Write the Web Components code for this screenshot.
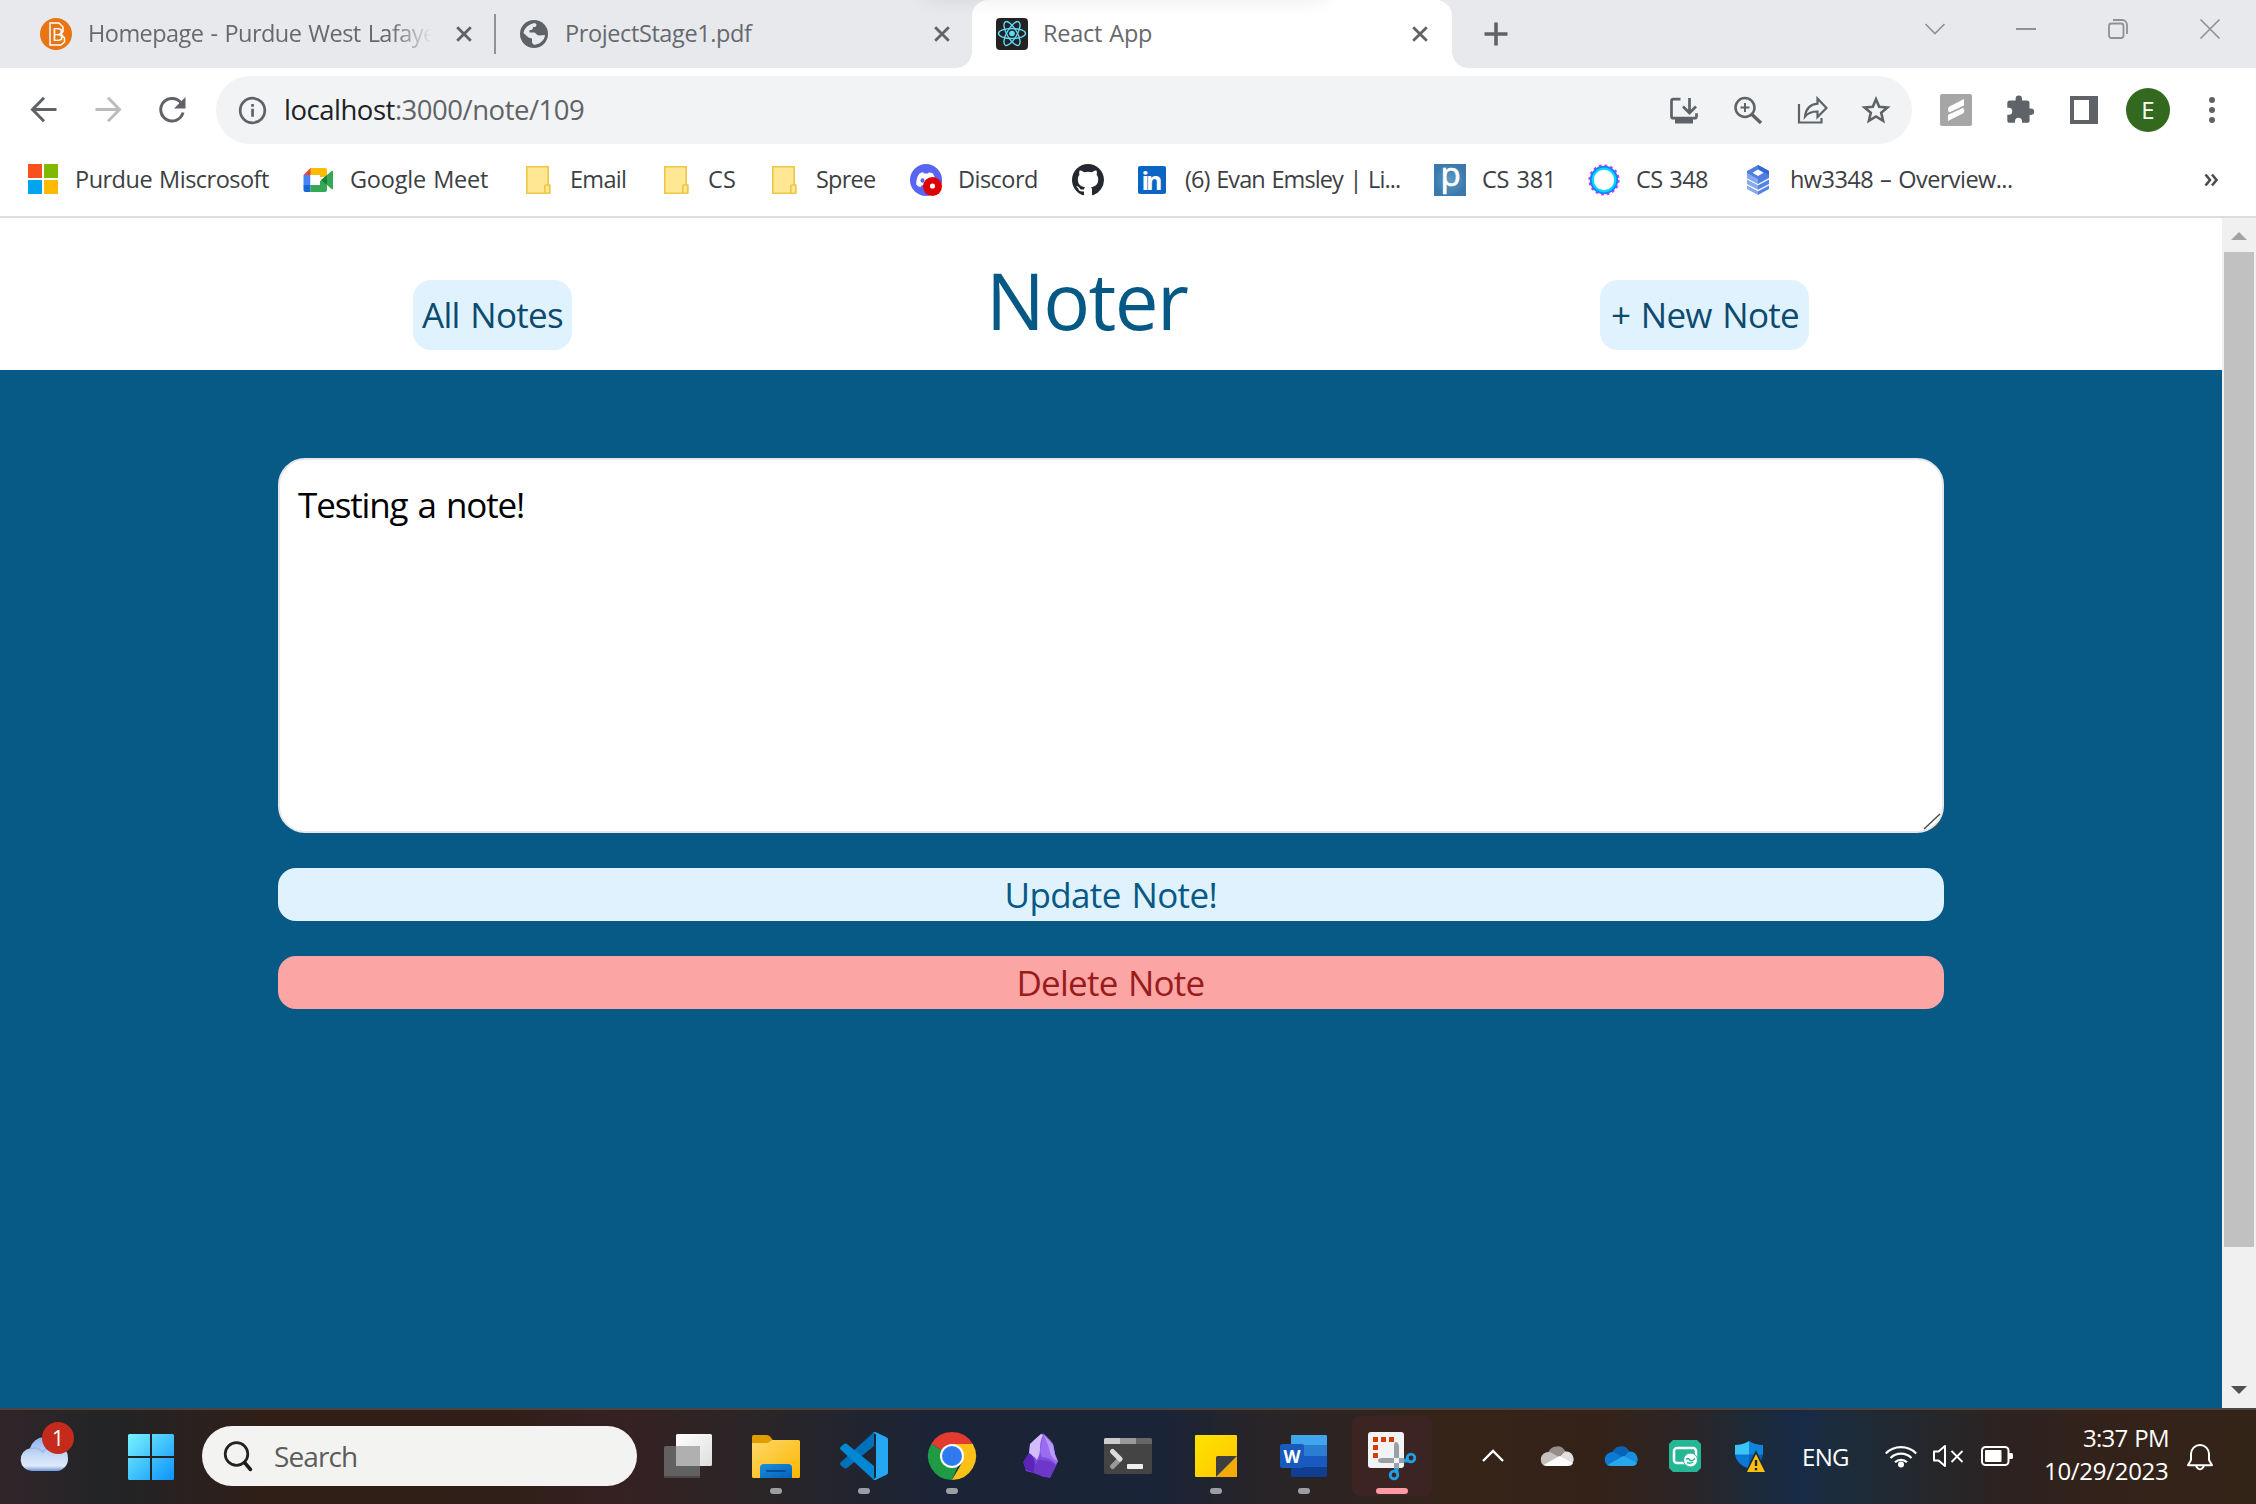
<!DOCTYPE html>
<html lang="en">
<head>
<meta charset="utf-8">
<title>React App</title>
<style>
html,body{margin:0;padding:0}
body{width:2256px;height:1504px;overflow:hidden;font-family:"Open Sans","Noto Sans",sans-serif;background:#fff}
</style>
</head>
<body>
<desktop-screen></desktop-screen>
<script>
const ICONS = {
  brightspace:[32,32,'<circle cx="16" cy="16" r="16" fill="#e87511"/><path d="M10 5h9l4 4v4.500l-2 2.500 3.500 4v4L21 27H10z" fill="none" stroke="#fff" stroke-width="1.500"/><text x="12" y="23" font-family="Open Sans,sans-serif" font-size="18" font-weight="400" fill="#fff">B</text>'],
  globe:[28,28,'<circle cx="14" cy="14" r="14" fill="#5f6368"/><path d="M15 3C9 4 4.500 7.500 3.500 13l5 4.500 3.500 1v3.500c0 2 2 2.500 2.500 3l.5-.2c5-.8 9.500-4.500 10-9.800l-6 .5c-2.500 0-3-3-5-3H9.500v-2.500c2.500.3 3.500-.5 3.500-3 2.500.2 3.500-.5 3.500-2.500z" fill="#e8eaed"/>'],
  react:[32,32,'<rect width="32" height="32" rx="4" fill="#222"/><g fill="none" stroke="#61dafb" stroke-width="1.400"><ellipse cx="16" cy="15.500" rx="13.500" ry="5"/><ellipse cx="16" cy="15.500" rx="13.500" ry="5" transform="rotate(60 16 15.500)"/><ellipse cx="16" cy="15.500" rx="13.500" ry="5" transform="rotate(120 16 15.500)"/></g><circle cx="16" cy="15.500" r="2.800" fill="#61dafb"/>'],
  close:[16,16,'<path d="M1.200 1.200 14.800 14.800M14.800 1.200 1.200 14.800" stroke="#5f6368" stroke-width="2.800"/>'],
  plus:[24,24,'<path d="M12 .5v23M.5 12h23" stroke="#5f6368" stroke-width="3.600"/>'],
  wchev:[20,20,'<path d="M.5 5 10 14.500 19.500 5" fill="none" stroke="#919194" stroke-width="1.700"/>'],
  wmin:[20,20,'<path d="M0 10h20" stroke="#919194" stroke-width="2"/>'],
  wmax:[20,20,'<rect x="1" y="4.500" width="14.500" height="14.500" rx="2.500" fill="none" stroke="#919194" stroke-width="1.800"/><path d="M5 1h9a5 5 0 0 1 5 5v9" fill="none" stroke="#919194" stroke-width="1.800"/>'],
  wclose:[20,20,'<path d="M.5.5l19 19M19.500.5l-19 19" stroke="#919194" stroke-width="1.700"/>'],
  back:[32,32,'<path d="M28.500 15.500H4.500M16 3.800 4.500 15.500 16 27.200" fill="none" stroke="#5f6368" stroke-width="3"/>'],
  forward:[32,32,'<path d="M3.500 15.500h24M16 3.800 27.500 15.500 16 27.200" fill="none" stroke="#babcbe" stroke-width="3"/>'],
  reload:[32,32,'<path d="M25.500 9.500A11.300 11.300 0 1 0 27 18.500" fill="none" stroke="#5f6368" stroke-width="3"/><path d="M29.500 3v11.500H18z" fill="#5f6368"/>'],
  info:[32,32,'<circle cx="16.500" cy="16.500" r="12.300" fill="none" stroke="#5f6368" stroke-width="2.700"/><path d="M15.200 14.800h2.700v8h-2.700zM15.200 10h2.700v2.700h-2.700z" fill="#5f6368"/>'],
  install:[32,32,'<path d="M12.500 5.200H5.500a2 2 0 0 0-2 2v15a2 2 0 0 0 2 2h21a2 2 0 0 0 2-2v-3M21.500 4v14M15 12.500l6.500 6.500 6.500-6.500" fill="none" stroke="#5f6368" stroke-width="2.700"/><path d="M7 25h18v4.500H7z" fill="#5f6368"/>'],
  zoomin:[32,32,'<circle cx="13" cy="13.500" r="9.500" fill="none" stroke="#5f6368" stroke-width="2.500"/><path d="M20 20.500l9 8.500" stroke="#5f6368" stroke-width="3.400"/><path d="M13 9v9M8.500 13.500h9" stroke="#5f6368" stroke-width="2"/>'],
  share:[32,32,'<path d="M3 10v18.500h22.500V24" fill="none" stroke="#5f6368" stroke-width="2.200"/><path d="M21.500 4.500l9 9.500-9 9v-5.500c-6 0-9.500 1.500-12.500 5 .8-6.500 4.500-12 12.500-12.800z" fill="none" stroke="#5f6368" stroke-width="2.200"/>'],
  star:[32,32,'<path d="M16 5.300l3.200 7.500 8.200.7-6.200 5.300 1.900 8-7.100-4.300-7.100 4.300 1.900-8-6.200-5.300 8.200-.7z" fill="none" stroke="#5f6368" stroke-width="2.600"/>'],
  ext:[32,32,'<rect width="32" height="32" rx="2" fill="#a6a6a6"/><path d="M24 5v6.500L9.500 18.500c-2-1.500-2-4.500 0-6zM8 27v-6.500L22.500 13.500c2.500 2 2.500 4.500.3 6z" fill="#fff"/><path d="M7 19.800 25 11.600v1.500L7 21.300z" fill="#a6a6a6"/>'],
  puzzle:[32,32,'<path transform="translate(1 0)" d="M26 14.500h-1.500V9a2.600 2.600 0 0 0-2.600-2.600H17V4.800a3.200 3.200 0 0 0-6.400 0v1.600H5A2.600 2.600 0 0 0 2.300 9v4.800h1.500a3.500 3.500 0 0 1 0 7H2.300v5.400A2.600 2.600 0 0 0 5 28.800h5v-1.500a3.500 3.500 0 0 1 7 0v1.500h5a2.600 2.600 0 0 0 2.600-2.600v-5.300H26a3.200 3.200 0 0 0 0-6.400z" fill="#5f6368"/>'],
  panel:[32,32,'<path d="M2 2h28v28H2zM6 6v20h15V6z" fill-rule="evenodd" fill="#5f6368"/>'],
  avatar:[44,44,'<circle cx="22" cy="22" r="22" fill="#33691e"/><text x="22" y="30.500" text-anchor="middle" font-family="Open Sans,sans-serif" font-size="24" fill="#fff">E</text>'],
  dots:[32,32,'<g fill="#5f6368"><circle cx="16" cy="6" r="3"/><circle cx="16" cy="16" r="3"/><circle cx="16" cy="26" r="3"/></g>'],
  ms:[32,32,'<path d="M1 0h14v14H1z" fill="#f8511d"/><path d="M17 0h14v14H17z" fill="#80b900"/><path d="M1 16h14v14H1z" fill="#00a4ef"/><path d="M17 16h14v14H17z" fill="#ffb902"/>'],
  meet:[32,32,'<path d="M8 4h15a2 2 0 0 1 2 2v7H18V11H8z" fill="#fbbc04"/><path d="M1.500 11 8.500 4v7z" fill="#ea4335"/><path d="M1.500 11h7v10.500h-7z" fill="#4285f4"/><path d="M1.500 21h7v7H3.500a2 2 0 0 1-2-2z" fill="#1967d2"/><path d="M8.500 21H18v-4l7-4v13a2 2 0 0 1-2 2H8.500z" fill="#34a853"/><path d="M19 16l6-5v10z" fill="#188038"/><path d="M25 11l4.500-4c.8-.6 1.500-.3 1.500.6v16.800c0 1-.8 1.200-1.500.6l-4.500-4z" fill="#34a853"/><path d="M8.500 11H18v10H8.500z" fill="#fff"/>'],
  folder:[32,32,'<path d="M4.800 2.800h21.400V21h1.500v8.200H4.800z" fill="#ffe793" stroke="#edc748" stroke-width="1.600"/><path d="M22.800 29v-6.500q0-1.500 1.500-1.500h2q1.400 0 1.400 1.500v5q0 1.700-1.700 1.700z" fill="#ffe793" stroke="#edc748" stroke-width="1.600"/>'],
  discord:[32,32,'<circle cx="16" cy="16" r="16" fill="#5865f2"/><path d="M9.500 9.500q3-1.600 4-1l.5 1h4l.5-1q2-.5 4.500 1 3 5 2.800 11-2 2.500-4.500 2.500l-1-1.800h-8.600l-1 1.800q-2.500 0-4.500-2.500Q6 14 9.500 9.500z" fill="#fff"/><ellipse cx="12.500" cy="16.500" rx="2" ry="2.300" fill="#5865f2"/><circle cx="22.500" cy="22.500" r="9.500" fill="#de0000"/><circle cx="22.500" cy="22" r="2.600" fill="#fff"/>'],
  github:[32,32,'<path transform="scale(2)" fill="#24292f" d="M8 0C3.580 0 0 3.580 0 8c0 3.540 2.290 6.530 5.470 7.590.4.070.55-.17.55-.38 0-.19-.01-.82-.01-1.490-2.010.37-2.530-.49-2.690-.94-.09-.23-.48-.94-.82-1.130-.28-.15-.68-.52-.01-.53.63-.01 1.080.58 1.230.82.72 1.210 1.870.87 2.330.66.07-.52.28-.87.51-1.070-1.780-.2-3.640-.89-3.640-3.950 0-.87.31-1.590.82-2.150-.08-.2-.36-1.020.08-2.120 0 0 .67-.21 2.200.82.64-.18 1.320-.27 2-.27s1.360.09 2 .27c1.530-1.040 2.200-.82 2.200-.82.44 1.100.16 1.920.08 2.120.51.56.82 1.270.82 2.150 0 3.070-1.870 3.750-3.650 3.950.29.25.54.73.54 1.480 0 1.070-.01 1.930-.01 2.200 0 .21.15.46.55.38A8.010 8.010 0 0 0 16 8c0-4.420-3.580-8-8-8z"/>'],
  linkedin:[32,32,'<rect x="2" y="2" width="28" height="28" rx="2" fill="#0a66c2"/><text x="16" y="26" text-anchor="middle" textLength="21" font-family="Open Sans,sans-serif" font-size="25" font-weight="700" fill="#fff">in</text>'],
  piazza:[32,32,'<defs><radialGradient id="pz"><stop offset="0" stop-color="#5b9bc7"/><stop offset="1" stop-color="#3c79aa"/></radialGradient></defs><rect width="32" height="32" fill="url(#pz)"/><text x="16.500" y="21.500" text-anchor="middle" font-family="Open Sans,sans-serif" font-size="33" font-weight="400" stroke="#fff" stroke-width=".7" fill="#fff">p</text>'],
  ring:[32,32,'<circle cx="16" cy="16" r="14.300" fill="none" stroke="#d83cf5" stroke-width="2.600" stroke-dasharray="2.800 2.815"/><circle cx="16" cy="16" r="12.700" fill="none" stroke="#1a7cff" stroke-width="3"/><circle cx="16" cy="16" r="11.300" fill="none" stroke="#00d5ff" stroke-width="2.200"/>'],
  stack:[32,32,'<path d="M16 1l11 6v7l-11 6-11-6V7z" fill="#4f7fe0"/><path d="M16 1l11 6v4L16 5z" fill="#3367d6"/><path d="M16 5.500l5.500 3.300-5.500 3.300-5.500-3.300z" fill="#fff"/><path d="M5 15.500l11 5.800v4.500L5 20zM5 21.500l11 5.800V31L5 25z" fill="#86a9ee"/><path d="M27 15.500l-11 5.800v4.500L27 20zM27 21.500l-11 5.800V31l11-6z" fill="#5484e4"/><path d="M5 9l11 6v5L5 14z" fill="#86a9ee"/>'],
  more:[14,16,'<path d="M1.500 2.500l4.500 5.500-4.500 5.500M8 2.500l4.500 5.500L8 13.500" fill="none" stroke="#4a4d51" stroke-width="2.600"/>'],
  resize:[18,17,'<path d="M1 16 17 1M11 16l6-6" stroke="#4a4a4a" stroke-width="1.400"/>'],
  weather:[56,50,'<defs><linearGradient id="cl" x1="0" y1="0" x2="0" y2="1"><stop offset="0" stop-color="#8cb0ef"/><stop offset=".5" stop-color="#c2d7f6"/><stop offset=".85" stop-color="#dfeafb"/><stop offset="1" stop-color="#6f96e0"/></linearGradient></defs><path d="M12 49a11.500 11.500 0 0 1-2-22.800A15.500 15.500 0 0 1 39 24q9 2 9 12.500A12 12 0 0 1 37 49z" fill="url(#cl)"/><path d="M10 27q7-3 13 3 4-6 12-5" fill="none" stroke="#9cb9ea" stroke-width="1.500"/><circle cx="38" cy="16" r="16" fill="#c42b1c"/><text x="38" y="23.500" text-anchor="middle" font-family="Open Sans,sans-serif" font-size="21" fill="#fff">1</text>'],
  start:[46,46,'<defs><linearGradient id="st" gradientUnits="userSpaceOnUse" x1="0" y1="0" x2="46" y2="46"><stop offset="0" stop-color="#7af2ff"/><stop offset="1" stop-color="#0a93fb"/></linearGradient></defs><path d="M1.500 0H22v22H0V1.500Q0 0 1.500 0zM24 0h20.500Q46 0 46 1.500V22H24zM0 24h22v22H1.500Q0 46 0 44.500zM24 24h22v20.500q0 1.500-1.500 1.500H24z" fill="url(#st)"/>'],
  search:[28,30,'<circle cx="12.500" cy="13" r="11.300" fill="none" stroke="#222" stroke-width="2.700"/><path d="M20.500 21.500l6 7" stroke="#1c1c1c" stroke-width="3.500" stroke-linecap="round"/>'],
  taskview:[48,48,'<defs><linearGradient id="tv" x1="0" y1="0" x2="1" y2="1"><stop offset="0" stop-color="#fff"/><stop offset="1" stop-color="#dedede"/></linearGradient></defs><rect x="0" y="14" width="36" height="32" rx="1.500" fill="#616161"/><rect x="12" y="2" width="36" height="32" rx="1.500" fill="url(#tv)"/><path d="M12 14h24v20H12z" fill="#b0b0b0"/><path d="M0 44h36v1q0 1-1 1H1q-1 0-1-1z" fill="#484848"/>'],
  explorer:[48,48,'<defs><linearGradient id="fo" x1="0" y1="0" x2="1" y2="1"><stop offset="0" stop-color="#ffd868"/><stop offset="1" stop-color="#fab702"/></linearGradient><linearGradient id="fb" x1="0" y1="0" x2="1" y2="1"><stop offset="0" stop-color="#1a90e0"/><stop offset="1" stop-color="#0560b6"/></linearGradient></defs><path d="M0 4.500Q0 3 1.500 3H15q2 0 3.500 2l3 4-6 5H0z" fill="#e09c00"/><path d="M0 11h14q2 0 4-1.500l2-1.500h26.500Q48 8 48 9.500v35q0 1.500-1.500 1.500h-45Q0 46 0 44.500z" fill="url(#fo)"/><path d="M8 46V36q0-4 4-4h24q4 0 4 4v10z" fill="url(#fb)"/><path d="M15 39h18" stroke="#0a4c94" stroke-width="1.800" stroke-linecap="round"/>'],
  vscode:[48,48,'<path d="M34 0v14L7 36q-1.500 1-3 0l-3.500-3q-1-1.200 0-2.500z" fill="#0070b8"/><path d="M34 48V34L7 12q-1.500-1-3 0L.5 15q-1 1.200 0 2.500z" fill="#0088d4"/><path d="M33 .5q1.500-1 3.500 0L47 5.500q1 .5 1 2v33q0 1.500-1 2l-10.500 5q-2 1-3 .2l2.500-2.700V2.500z" fill="#24a8f2"/>'],
  chrome:[48,48,'<path d="M24 24 3.200 12A24 24 0 0 1 44.800 12z" fill="#e33b2e"/><path d="M24 24H34.500L24 48A24 24 0 0 1 3.200 12z" fill="#1f9a45"/><path d="M24 12h20.800A24 24 0 0 1 24 48l10.400-18z" fill="#fbc116"/><circle cx="24" cy="24" r="12" fill="#fff"/><circle cx="24" cy="24" r="10" fill="#2f7af0"/>'],
  obsidian:[48,48,'<path d="M25 2q2-1 3.500.5L37 12l2 10 3 7.500-8 16-7-1-9-3.500-8-2-2.500-9L13 21l1-9z" fill="#7c4bdb"/><path d="M25 2q-6 5-11 10l-1 10q5 2 8 6 3-5 3-10 0-9 3-15z" fill="#d3bcfa"/><path d="M27.500 2Q36 9 37.500 13l1.500 9 3 7.500-2 2.500q-5-6-14-7-3-5-1-11 1-7 2.500-12z" fill="#9a6cf2"/><path d="M28 3l9 10 2 10 2.500 6q-5-2-7-7-2-9-6.500-19z" fill="#b99af6"/><path d="M13 21q8 4 5 20L9.500 37.500 7 30z" fill="#5b24b8"/><path d="M18 41q-1-9 5-13 11-1 17 6l-6 12-7-1.500z" fill="#6d38c9"/>'],
  terminal:[48,48,'<rect y="6" width="48" height="36" rx="1.800" fill="#444"/><path d="M0 12V7.500Q0 6 1.500 6H16v6z" fill="#ccc"/><path d="M16 6h16v6H16z" fill="#999"/><path d="M32 6h14.500Q48 6 48 7.500V12H32z" fill="#666"/><path d="M8.500 34.500 16 27" stroke="#999" stroke-width="5" stroke-linecap="round"/><path d="M8.500 19.500l7.500 7.500" stroke="#ddd" stroke-width="5" stroke-linecap="round"/><rect x="23" y="32" width="16" height="5" rx=".8" fill="#eee"/>'],
  sticky:[48,48,'<defs><linearGradient id="sn" x1="0" y1="0" x2="1" y2="1"><stop offset="0" stop-color="#ffe400"/><stop offset="1" stop-color="#ffc402"/></linearGradient></defs><rect x="3" y="3" width="42" height="42" rx="1" fill="url(#sn)"/><path d="M45 24v21H24z" fill="#f3ab08"/><path d="M24 25.500Q24 24 25.500 24H45L24 45z" fill="#3f3f41"/>'],
  word:[48,48,'<path d="M11 4.200Q11 3 12.200 3h33.300Q47 3 47 4.200V14H11z" fill="#41a5ee"/><path d="M11 13h36v11H11z" fill="#2b7cd3"/><path d="M11 24h36v11H11z" fill="#185abd"/><path d="M11 35h36v8.500q0 1.500-1.500 1.500h-33Q11 45 11 43.500z" fill="#103f91"/><rect x="0" y="12" width="24" height="24" rx="2" fill="#185abd"/><text x="12" y="30.500" text-anchor="middle" textLength="17" lengthAdjust="spacingAndGlyphs" font-family="Open Sans,sans-serif" font-size="18.500" font-weight="700" fill="#fff">W</text>'],
  snip:[48,48,'<rect width="36" height="36" rx="3" fill="#f1f3f4"/><g fill="#d83b01"><path d="M5 5h5v5H5zM13 5h5v5h-5zM21 5h5v5h-5zM5 13h5v5H5zM5 21h5v5H5z"/></g><path d="M26 37V14q0-4 2-4t3 4v23zM36 26H14q-4 0-4 2.500T14 31h22z" fill="#9aa0a6"/><circle cx="28.500" cy="28.500" r="1.200" fill="#eee"/><circle cx="43" cy="26" r="3.800" fill="none" stroke="#1ea0e8" stroke-width="2.800"/><circle cx="26" cy="43" r="3.800" fill="none" stroke="#1ea0e8" stroke-width="2.800"/><path d="M36 28.500h5M28.500 36v5" stroke="#1ea0e8" stroke-width="4"/>'],
  tchev:[24,32,'<path d="M2 21 12 11l10 10" fill="none" stroke="#fff" stroke-width="2.400"/>'],
  cloudw:[32,32,'<path d="M7 13a9.500 9.500 0 0 1 17.500-1.500l-9 7z" fill="#978d88"/><path d="M0 21a7.500 7.500 0 0 1 10-8.500l8 4.500L2 25q-2-1.500-2-4z" fill="#c6c1be"/><path d="M18 17l6-5.500a7.500 7.500 0 0 1 7 12z" fill="#e2dfde"/><path d="M2 25l16.500-9L32 23q-1 3-5 3H6q-2.500 0-4-1z" fill="#fff"/>'],
  cloudb:[32,32,'<path d="M7 13a9.500 9.500 0 0 1 17.500-1.500l-9 7z" fill="#0763b8"/><path d="M0 21a7.500 7.500 0 0 1 10-8.500l8 4.500L2 25q-2-1.500-2-4z" fill="#0a7ad6"/><path d="M18 17l6-5.500a7.500 7.500 0 0 1 7 12z" fill="#1590de"/><path d="M2 25l16.500-9L32 23q-1 3-5 3H6q-2.500 0-4-1z" fill="#28a8ea"/>'],
  cast:[32,32,'<path d="M4 0h24l4 4v24l-4 4H4l-4-4V4z" fill="#25b795"/><rect x="5" y="8" width="22" height="15" rx="3" fill="none" stroke="#fff" stroke-width="2.500"/><circle cx="21.500" cy="20" r="7" fill="#fff" stroke="#25b795" stroke-width="1"/><path d="M17 19.500q2-2 3.500 0t3 1l2.500-2M18 22.500q3 1.500 6-.5" fill="none" stroke="#25b795" stroke-width="1.500"/>'],
  shield:[32,32,'<path d="M1 5q8 0 14-4v14H1z" fill="#3cc4f5"/><path d="M15 1q6 4 14 4v10H15z" fill="#0f86dc"/><path d="M1 14.500h14V29Q2 24 1 14.500z" fill="#0a78d4"/><path d="M15 14.500h14Q28 24 15 29z" fill="#0560b8"/><path d="M22 10 11.500 32h20.500z" fill="#1d2a38"/><path d="M22 14l9 18H13z" fill="#fdc012"/><path d="M20.800 20h2.400v6h-2.400zM20.800 28h2.400v2.200h-2.400z" fill="#222"/>'],
  wifi:[32,32,'<g fill="none" stroke="#fff" stroke-width="2.200"><path d="M.8 13.500a21.500 21.500 0 0 1 30.400 0"/><path d="M5.500 18a15 15 0 0 1 21 0"/><path d="M10 22.300a8.500 8.500 0 0 1 12 0"/></g><circle cx="16" cy="24.500" r="3" fill="#fff"/>'],
  mute:[32,32,'<path d="M2 11.500h4.500L13 6v20l-6.500-5.500H2z" fill="none" stroke="#fff" stroke-width="2" stroke-linejoin="round"/><path d="M19.500 11l11 11M30.500 11l-11 11" stroke="#fff" stroke-width="1.800"/>'],
  battery:[32,32,'<rect x="1" y="7" width="26.500" height="18" rx="3.500" fill="none" stroke="#fff" stroke-width="2"/><rect x="4" y="10" width="16.500" height="12" rx="1" fill="#fff"/><path d="M28 13h2.500q1.500 0 1.500 1.500v3q0 1.500-1.500 1.500H28z" fill="#fff"/>'],
  bell:[26,30,'<path d="M4 13a9 9 0 0 1 18 0v6l3 5.200H1L4 19z" fill="none" stroke="#fff" stroke-width="2" stroke-linejoin="round"/><path d="M9 25q4 6.500 8 0" fill="none" stroke="#fff" stroke-width="2"/>'],
  up:[16,8,'<path d="M0 8 8 0l8 8z" fill="#a3a3a3"/>'],
  down:[16,8,'<path d="M0 0 8 8l8-8z" fill="#505050"/>']
};

function define(name, markup, setup) {
  const template = document.createElement('template');
  template.innerHTML = markup;
  customElements.define(name, class extends HTMLElement {
    connectedCallback() {
      if (this.shadowRoot) return;
      this.attachShadow({mode:'open'}).append(template.content.cloneNode(true));
      if (setup) setup(this, this.shadowRoot);
    }
  });
}

define('ui-icon', '<style>:host{display:block;flex:none}svg{display:block;overflow:visible}</style><div></div>', (host, root) => {
  const [w, h, body] = ICONS[host.getAttribute('name')];
  host.style.width = w + 'px';
  root.querySelector('div').innerHTML = `<svg width="${w}" height="${h}" viewBox="0 0 ${w} ${h}">${body}</svg>`;
});

const pen = document.createElement('canvas').getContext('2d');
define('ui-label', '<style>:host{display:block;flex:none;white-space:nowrap;line-height:1.36;word-spacing:.06em}span{display:block}</style><span><slot></slot></span>', (host, root) => {
  const size = +host.getAttribute('size'), width = +host.getAttribute('width');
  const text = host.textContent;
  const stem = /^[A-Zh-l+]/.test(text) && !/^[AGCST]/.test(text) ? 1 : 0;
  pen.font = `400 ${size}px "Open Sans"`;
  const m = pen.measureText(text);
  const ink = m.actualBoundingBoxRight + m.actualBoundingBoxLeft + (text.split(' ').length - 1) * .06 * size;
  host.style.fontSize = size + 'px';
  host.style.width = width + 'px';
  host.style.letterSpacing = (text.length > 1 ? (width - stem - ink) / (text.length - 1) : 0) + 'px';
  root.querySelector('span').style.marginLeft = (m.actualBoundingBoxLeft + stem) + 'px';
});

define('browser-tab', `<style>
:host{display:flex;align-items:center;box-sizing:border-box;height:68px;flex:none;position:relative;color:#66696d}
:host([active]){background:#fff;border-radius:16px 16px 0 0}
:host([active])::before,:host([active])::after{content:"";position:absolute;bottom:0;width:16px;height:16px}
:host([active])::before{left:-16px;background:radial-gradient(circle at 0 0,transparent 15.5px,#fff 16px)}
:host([active])::after{right:-16px;background:radial-gradient(circle at 100% 0,transparent 15.5px,#fff 16px)}
.x{margin-left:auto}
:host([faded]) .t{width:343px;overflow:hidden;-webkit-mask:linear-gradient(90deg,#000 88%,transparent)}
</style><slot name="icon"></slot><div class="t"><slot></slot></div><ui-icon class="x" name="close"></ui-icon>`);

define('tab-strip', `<style>
:host{display:flex;align-items:center;height:68px;background:#e8e9ed;position:relative;overflow:hidden}
.sep{width:2px;height:40px;background:#8f9296;flex:none}
.plus{margin-left:32px}
.win{margin:0 36px 10px auto;display:flex;gap:72px}
.win :first-child{margin-right:-1px}
.shade{position:absolute;left:925px;top:-22px;width:400px;height:20px;box-shadow:0 0 20px rgba(0,0,0,.1)}
</style>
<browser-tab faded style="width:494px;padding:0 22px 0 40px;gap:17px"><ui-icon slot="icon" name="brightspace"></ui-icon><ui-label size="23.500" width="346">Homepage - Purdue West Lafaye</ui-label></browser-tab>
<div class="sep"></div>
<browser-tab style="width:476px;padding:0 22px 0 24px;gap:18px"><ui-icon slot="icon" name="globe"></ui-icon><ui-label size="23.500" width="187">ProjectStage1.pdf</ui-label></browser-tab>
<browser-tab active style="width:480px;padding:0 24px;gap:16px"><ui-icon slot="icon" name="react"></ui-icon><ui-label size="23.500" width="108">React App</ui-label></browser-tab>
<ui-icon class="plus" name="plus"></ui-icon>
<div class="win"><ui-icon name="wchev"></ui-icon><ui-icon name="wmin"></ui-icon><ui-icon name="wmax"></ui-icon><ui-icon name="wclose"></ui-icon></div>
<div class="shade"></div>`);

define('nav-toolbar', `<style>
:host{display:flex;align-items:center;height:68px;padding:8px 28px 0;background:#fff}
.nav,.ext,.acts{display:flex;align-items:center;gap:32px}
.box{flex:1;margin:0 28px;height:68px;border-radius:34px;background:#f1f3f4;display:flex;align-items:center;padding:0 20px;box-sizing:border-box}
.url{margin-left:17px;color:#5f6368}
.acts{margin-left:auto}
.ext ui-icon[name=avatar]{margin:0 -6px}
</style>
<div class="nav"><ui-icon name="back"></ui-icon><ui-icon name="forward"></ui-icon><ui-icon name="reload"></ui-icon></div>
<div class="box"><ui-icon name="info"></ui-icon><ui-label class="url" size="27.500" width="299"><span style="color:#202124">localhost</span>:3000/note/109</ui-label>
<div class="acts"><ui-icon name="install"></ui-icon><ui-icon name="zoomin"></ui-icon><ui-icon name="share"></ui-icon><ui-icon name="star"></ui-icon></div></div>
<div class="ext"><ui-icon name="ext"></ui-icon><ui-icon name="puzzle"></ui-icon><ui-icon name="panel"></ui-icon><ui-icon name="avatar"></ui-icon><ui-icon name="dots"></ui-icon></div>`);

define('bookmark-item', '<style>:host{display:flex;align-items:center;gap:17px;flex:none;color:#3c4043}</style><slot></slot>');

const marks = [['ms',275,'Purdue Miscrosoft',193],['meet',220,'Google Meet',137],['folder',138,'Email',54],['folder',108,'CS',26],['folder',142,'Spree',58],['discord',162,'Discord',78],['github',64,'',0],['linkedin',298,'(6) Evan Emsley | Li...',215],['piazza',154,'CS 381',69],['ring',154,'CS 348',71],['stack',280,'hw3348 – Overview...',221]];
define('bookmarks-bar', `<style>
:host{display:flex;align-items:center;height:72px;padding:0 38px 0 27px;background:#fff;border-bottom:2px solid #dcdddd}
.more{margin-left:auto}
</style>${marks.map(([i,p,t,w]) => `<bookmark-item style="width:${p}px"><ui-icon name="${i}"></ui-icon>${t ? `<ui-label size="23.500" width="${w}">${t}</ui-label>` : ''}</bookmark-item>`).join('')}<ui-icon class="more" name="more"></ui-icon>`);

define('pill-button', `<style>
:host{display:flex;align-items:center;justify-content:center;box-sizing:border-box;border-radius:18px;background:#e0f2fe;color:#0c4a6e;height:70px}
:host([wide]){height:53px;color:#075985}
:host([tone=danger]){background:#fca5a5;color:#991b1b}
</style><slot></slot>`);

define('note-header', `<style>
:host{display:flex;align-items:flex-start;height:152px;box-sizing:border-box;background:#fff;padding:0 413px}
pill-button{margin-top:62px}
.logo{color:#075985;margin:29px auto 0 420px}
</style>
<pill-button style="width:159px"><ui-label size="35" width="141">All Notes</ui-label></pill-button>
<ui-label class="logo" size="78" width="196">Noter</ui-label>
<pill-button style="width:209px"><ui-label size="35" width="187">+ New Note</ui-label></pill-button>`);

define('note-editor', `<style>
:host{display:flex;justify-content:flex-end;align-items:flex-end;flex-direction:column;height:375px;box-sizing:border-box;border:2px solid #e5e7eb;border-radius:27px;background:#fff;padding:18px 1px 1px 18px;color:#000}
.t{align-self:flex-start;margin-bottom:auto;padding-top:3px}
</style><div class="t"><slot></slot></div><ui-icon name="resize"></ui-icon>`);

define('page-scrollbar', `<style>
:host{display:flex;flex-direction:column;align-items:center;justify-content:space-between;width:34px;box-sizing:border-box;padding:14px 0 14px;background:#f0f0f0}
.thumb{width:30px;height:995px;background:#c1c1c1;margin-top:12px;margin-bottom:auto}
</style><ui-icon name="up"></ui-icon><div class="thumb"></div><ui-icon name="down"></ui-icon>`);

define('note-page', `<style>
:host{display:flex;height:1190px}
main{flex:1;background:#065a85;display:flex;flex-direction:column}
section{padding:88px 278px 0;display:flex;flex-direction:column;gap:35px}
</style><main><note-header></note-header><section>
<note-editor><ui-label size="35" width="225">Testing a note!</ui-label></note-editor>
<pill-button wide><ui-label size="35" width="209">Update Note!</ui-label></pill-button>
<pill-button wide tone="danger"><ui-label size="35" width="185">Delete Note</ui-label></pill-button>
</section></main><page-scrollbar></page-scrollbar>`);

define('task-app', `<style>
:host{display:flex;flex-direction:column;align-items:center;box-sizing:border-box;width:80px;height:80px;padding-top:16px;border-radius:8px;flex:none}
:host([focused]){background:#3c2422}
i{display:none;width:12px;height:6px;border-radius:3px;background:#9d9ea3;margin-top:8px}
:host([open]) i{display:block}
:host([focused]) i{display:block;width:32px;background:#ff99a4}
</style><slot></slot><i></i>`);

define('task-bar', `<style>
:host{display:flex;align-items:center;height:94px;border-top:2px solid #4b4644;color:#fff;background:linear-gradient(90deg,#30262a 0,#222426 110px,#2a2120 190px,#301f16 270px,#301f18 500px,#352122 620px,#2a2527 760px,#1b2436 930px,#1a2438 1160px,#272429 1250px,#2f241e 1380px,#362419 1450px,#342219 1600px,#2b2527 1690px,#1d2a38 1750px,#172b47 1800px,#1c2c3c 1840px,#25272b 1930px,#2d2220 2010px,#33221a 2100px,#332418 2256px)}
.w{margin:-20px 0 0 20px;height:50px}
.s{margin-left:52px}
.search{box-sizing:border-box;width:435px;height:60px;border-radius:30px;background:#f3f3f2;margin-left:28px;padding-left:22px;display:flex;align-items:center;gap:23px;color:#5c5c5c;margin-top:-2px}
.apps{display:flex;gap:8px;margin-left:11px;margin-top:-2px}
.tray{display:flex;align-items:center;margin-top:-2px}
.clock{display:flex;flex-direction:column;align-items:flex-end;margin:-2px 0 0 33px}
</style>
<ui-icon class="w" name="weather"></ui-icon><ui-icon class="s" name="start"></ui-icon>
<div class="search"><ui-icon name="search"></ui-icon><ui-label size="28" width="81">Search</ui-label></div>
<div class="apps">${[['taskview',''],['explorer','open'],['vscode','open'],['chrome','open'],['obsidian',''],['terminal',''],['sticky','open'],['word','open'],['snip','focused']].map(([n,s]) => `<task-app ${s}><ui-icon name="${n}"></ui-icon></task-app>`).join('')}</div>
<div class="tray">
<ui-icon name="tchev" style="margin-left:49px"></ui-icon>
<ui-icon name="cloudw" style="margin-left:36px"></ui-icon>
<ui-icon name="cloudb" style="margin-left:32px"></ui-icon>
<ui-icon name="cast" style="margin-left:32px"></ui-icon>
<ui-icon name="shield" style="margin-left:33px"></ui-icon>
<ui-label size="24" width="45" style="margin:2px 0 0 37px">ENG</ui-label>
<ui-icon name="wifi" style="margin-left:37px"></ui-icon>
<ui-icon name="mute" style="margin-left:15px"></ui-icon>
<ui-icon name="battery" style="margin-left:17px"></ui-icon>
<div class="clock"><ui-label size="24" width="84">3:37 PM</ui-label><ui-label size="24" width="122">10/29/2023</ui-label></div>
<ui-icon name="bell" style="margin-left:19px"></ui-icon>
</div>`);

define('desktop-screen', `<style>:host{display:flex;flex-direction:column;width:2256px;height:1504px;overflow:hidden}</style>
<tab-strip></tab-strip><nav-toolbar></nav-toolbar><bookmarks-bar></bookmarks-bar><note-page></note-page><task-bar></task-bar>`);
</script>
</body>
</html>
